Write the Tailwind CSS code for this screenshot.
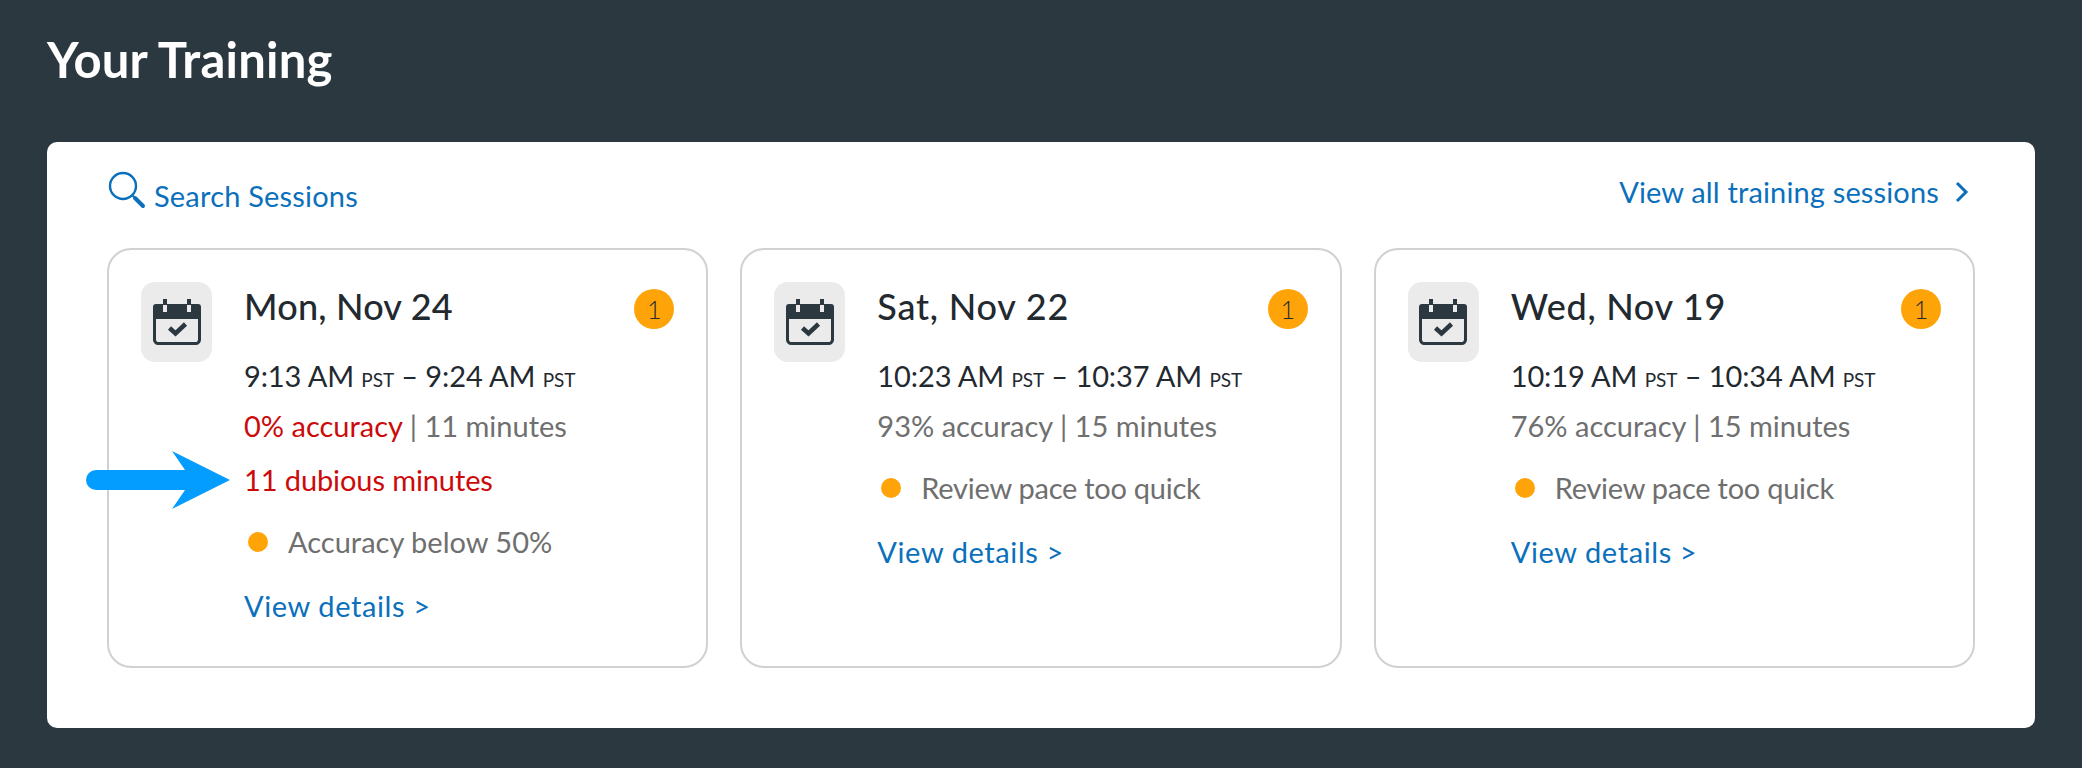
<!DOCTYPE html>
<html><head><meta charset="utf-8"><script src="https://cdn.jsdelivr.net/npm/@tailwindcss/browser@4"></script></head>
<body class="m-0">
<div class="w-[2082px] h-[768px] bg-[#2c3840] overflow-hidden font-['Lato','Noto_Sans',sans-serif] px-[47px]">
  <h1 class="h-[142px] pt-[31px] text-[49px] leading-[56px] font-bold tracking-[0.2px] text-white">Your Training</h1>
  <main class="relative h-[586px] bg-white rounded-[10px] px-[60px]">
    <div class="flex justify-between h-[106px] text-[#0b70bb] text-[29px]">
      <div class="flex items-start pt-[31px] gap-[8px] pl-[1px]">
        <svg class="w-[38px] h-[38px] mt-[-2px]" viewBox="0 0 38 38" fill="none" stroke="#0b70bb"><circle cx="15" cy="15" r="13" stroke-width="2.4"/><path d="M24 24l3 3" stroke-width="2"/><path d="M27 27l8 8" stroke-width="4" stroke-linecap="round"/></svg>
        <span class="leading-[40px] mt-[3px] tracking-[0.2px]">Search Sessions</span>
      </div>
      <div class="flex items-start pt-[30px] gap-[16px] pr-[6px]">
        <span class="leading-[40px] tracking-[0.15px]">View all training sessions</span>
        <svg class="w-[14px] h-[22px] mt-[9px]" viewBox="0 0 14 22" fill="none" stroke="#0b70bb" stroke-width="3"><path d="M2 2l9 9-9 9"/></svg>
      </div>
    </div>
    <div class="grid grid-cols-3 gap-[32px]">

      <article class="h-[420px] border-2 border-[#d1d1d1] rounded-[24px] pl-[32px] pr-[32px] pt-[32px] flex text-[29px] leading-[40px]">
        <div class="w-[71px] h-[80px] rounded-[14px] bg-[#ebebeb] flex items-center justify-center shrink-0">
          <svg class="w-[48px] h-[46px]" viewBox="0 0 48 46"><path d="M10 0h4v6h-4zM34 0h4v6h-4z" fill="#2c3840"/><path d="M3 5h7v8h4V5h20v8h4V5h7a3 3 0 0 1 3 3v12H0V8a3 3 0 0 1 3-3z" fill="#2c3840"/><path d="M1.500 18v22a4 4 0 0 0 4 4.500h37a4 4 0 0 0 4-4.500V18" fill="none" stroke="#2c3840" stroke-width="3"/><path d="M16.500 29l6 5.500 10-9.500" fill="none" stroke="#2c3840" stroke-width="4.500"/></svg>
        </div>
        <div class="ml-[32px] flex-1 min-w-0">
          <div class="flex justify-between items-start">
            <h2 class="text-[36px] leading-[48px] font-medium tracking-[0.2px] text-[#22292f]">Mon, Nov 24</h2>
            <span class="w-[40px] h-[40px] mt-[7px] rounded-full bg-[#ffa408] text-[#22292f] text-[25px] font-light flex items-center justify-center">1</span>
          </div>
          <p class="mt-[26px] text-[#22292f] tracking-[-0.1px]">9:13 AM <span class="text-[19px]">PST</span> – 9:24 AM <span class="text-[19px]">PST</span></p>
          <p class="mt-[6px] text-[#6f6f6f]"><span class="text-[#cc0a0a]">0% accuracy</span> | 11 minutes</p>
          <p class="mt-[14px] text-[#cc0a0a] tracking-[-0.1px]">11 dubious minutes</p>
          <div class="mt-[22px] flex items-center text-[#6f6f6f]"><span class="w-[20px] h-[20px] ml-[4px] rounded-full bg-[#ffa408]"></span><span class="ml-[20px]">Accuracy below 50%</span></div>
          <a class="block mt-[24px] text-[#0b70bb] tracking-[0.6px]">View details &gt;</a>
        </div>
      </article>

      <article class="h-[420px] border-2 border-[#d1d1d1] rounded-[24px] pl-[32px] pr-[32px] pt-[32px] flex text-[29px] leading-[40px]">
        <div class="w-[71px] h-[80px] rounded-[14px] bg-[#ebebeb] flex items-center justify-center shrink-0">
          <svg class="w-[48px] h-[46px]" viewBox="0 0 48 46"><path d="M10 0h4v6h-4zM34 0h4v6h-4z" fill="#2c3840"/><path d="M3 5h7v8h4V5h20v8h4V5h7a3 3 0 0 1 3 3v12H0V8a3 3 0 0 1 3-3z" fill="#2c3840"/><path d="M1.500 18v22a4 4 0 0 0 4 4.500h37a4 4 0 0 0 4-4.500V18" fill="none" stroke="#2c3840" stroke-width="3"/><path d="M16.500 29l6 5.500 10-9.500" fill="none" stroke="#2c3840" stroke-width="4.500"/></svg>
        </div>
        <div class="ml-[32px] flex-1 min-w-0">
          <div class="flex justify-between items-start">
            <h2 class="text-[36px] leading-[48px] font-medium tracking-[0.8px] text-[#22292f]">Sat, Nov 22</h2>
            <span class="w-[40px] h-[40px] mt-[7px] rounded-full bg-[#ffa408] text-[#22292f] text-[25px] font-light flex items-center justify-center">1</span>
          </div>
          <p class="mt-[26px] text-[#22292f] tracking-[-0.1px]">10:23 AM <span class="text-[19px]">PST</span> – 10:37 AM <span class="text-[19px]">PST</span></p>
          <p class="mt-[6px] text-[#6f6f6f]">93% accuracy | 15 minutes</p>
          <div class="mt-[22px] flex items-center text-[#6f6f6f]"><span class="w-[20px] h-[20px] ml-[4px] rounded-full bg-[#ffa408]"></span><span class="ml-[20px] tracking-[-0.25px]">Review pace too quick</span></div>
          <a class="block mt-[24px] text-[#0b70bb] tracking-[0.6px]">View details &gt;</a>
        </div>
      </article>

      <article class="h-[420px] border-2 border-[#d1d1d1] rounded-[24px] pl-[32px] pr-[32px] pt-[32px] flex text-[29px] leading-[40px]">
        <div class="w-[71px] h-[80px] rounded-[14px] bg-[#ebebeb] flex items-center justify-center shrink-0">
          <svg class="w-[48px] h-[46px]" viewBox="0 0 48 46"><path d="M10 0h4v6h-4zM34 0h4v6h-4z" fill="#2c3840"/><path d="M3 5h7v8h4V5h20v8h4V5h7a3 3 0 0 1 3 3v12H0V8a3 3 0 0 1 3-3z" fill="#2c3840"/><path d="M1.500 18v22a4 4 0 0 0 4 4.500h37a4 4 0 0 0 4-4.500V18" fill="none" stroke="#2c3840" stroke-width="3"/><path d="M16.500 29l6 5.500 10-9.500" fill="none" stroke="#2c3840" stroke-width="4.500"/></svg>
        </div>
        <div class="ml-[32px] flex-1 min-w-0">
          <div class="flex justify-between items-start">
            <h2 class="text-[36px] leading-[48px] font-medium tracking-[0.7px] text-[#22292f]">Wed, Nov 19</h2>
            <span class="w-[40px] h-[40px] mt-[7px] rounded-full bg-[#ffa408] text-[#22292f] text-[25px] font-light flex items-center justify-center">1</span>
          </div>
          <p class="mt-[26px] text-[#22292f] tracking-[-0.1px]">10:19 AM <span class="text-[19px]">PST</span> – 10:34 AM <span class="text-[19px]">PST</span></p>
          <p class="mt-[6px] text-[#6f6f6f]">76% accuracy | 15 minutes</p>
          <div class="mt-[22px] flex items-center text-[#6f6f6f]"><span class="w-[20px] h-[20px] ml-[4px] rounded-full bg-[#ffa408]"></span><span class="ml-[20px] tracking-[-0.25px]">Review pace too quick</span></div>
          <a class="block mt-[24px] text-[#0b70bb] tracking-[0.6px]">View details &gt;</a>
        </div>
      </article>
    </div>
    <svg class="absolute left-[39px] top-[309px] w-[144px] h-[58px]" viewBox="0 0 144 58"><path d="M10 19h89L86 0l58 29-58 29 13-19H10a10 10 0 0 1 0-20z" fill="#039dff"/></svg>
  </main>
</div>
</body></html>
